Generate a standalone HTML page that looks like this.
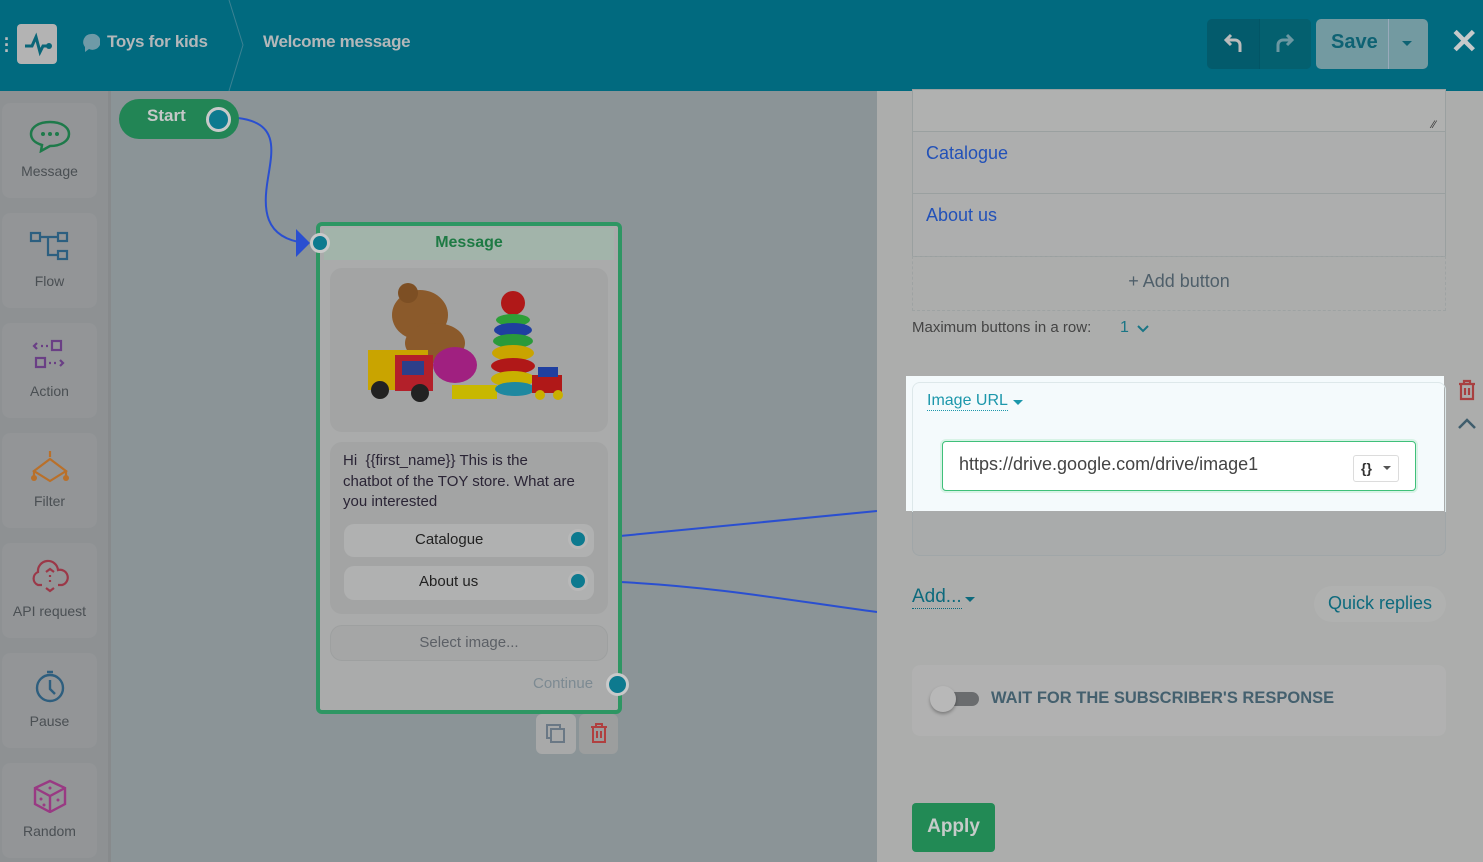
<!DOCTYPE html>
<html><head><meta charset="utf-8"><style>
*{box-sizing:border-box;margin:0;padding:0}
body{width:1483px;height:862px;overflow:hidden;font-family:"Liberation Sans",sans-serif;background:#8b9497;position:relative}
.abs{position:absolute}
.hdr{left:0;top:0;width:1483px;height:91px;background:#016a7f}
.side{left:0;top:91px;width:111px;height:771px;background:#8e9193;border-right:3px solid #878a8c}
.item{position:absolute;left:2px;width:95px;height:95px;background:#939597;border-radius:8px;text-align:center;font-size:14px;color:#4a4f53}
.item svg{display:block;margin:16px auto 10px}
.panel{left:877px;top:91px;width:606px;height:771px;background:#acadac}
.box{border:1px solid #9aa0a0}
.dot{position:absolute;width:20px;height:20px;border-radius:50%;background:#0d7a8f;border:3px solid #c9c9c9}
</style></head><body>
<div class="abs hdr">
 <div class="abs" style="left:4px;top:36px;color:#b9bcbe;font-size:18px;line-height:6px;font-weight:bold">·<br>·<br>·</div>
 <div class="abs" style="left:17px;top:24px;width:40px;height:40px;background:#b3b3b3;border-radius:4px">
  <svg width="40" height="40"><path d="M8 22h7l4-9 4 15 3-6h6" stroke="#0a6678" stroke-width="3" fill="none"/><circle cx="32" cy="22" r="3" fill="#0a6678"/></svg></div>
 <svg class="abs" style="left:82px;top:33px" width="18" height="20"><path d="M9 1a8 8 0 0 0-6 13v5l4-3a8 8 0 1 0 2-15z" fill="#6f9aa7"/></svg>
 <div class="abs" style="left:107px;top:32px;color:#b3b7b9;font-size:17px;font-weight:bold;letter-spacing:-0.3px">Toys for kids</div>
 <svg class="abs" style="left:226px;top:0" width="20" height="91"><path d="M3 0l14 45L3 91" stroke="#3b8293" fill="none"/></svg>
 <div class="abs" style="left:263px;top:32px;color:#b3b7b9;font-size:17px;font-weight:bold;letter-spacing:-0.3px">Welcome message</div>
 <div class="abs" style="left:1207px;top:19px;width:104px;height:50px;background:#035b6c;border-radius:5px"></div>
 <div class="abs" style="left:1259px;top:19px;width:52px;height:50px;background:#04606f;border-radius:0 5px 5px 0;border-left:1px solid #025566"></div>
 <svg class="abs" style="left:1222px;top:31px" width="22" height="24"><path d="M5 9h8a5 5 0 0 1 5 5v7M9 4L4 9l5 5" fill="none" stroke="#bbb" stroke-width="3"/></svg>
 <svg class="abs" style="left:1274px;top:31px" width="22" height="24"><path d="M17 9H9a5 5 0 0 0-5 5v7M13 4l5 5-5 5" fill="none" stroke="#6c98a2" stroke-width="3"/></svg>
 <div class="abs" style="left:1316px;top:19px;width:112px;height:50px;background:#739aa1;border-radius:5px"></div>
 <div class="abs" style="left:1388px;top:19px;width:1px;height:50px;background:#9ab"></div>
 <div class="abs" style="left:1331px;top:31px;color:#0e6273;font-size:20px;font-weight:bold">Save</div>
 <div class="abs" style="left:1402px;top:41px;border:5px solid transparent;border-top-color:#0e6273"></div>
 <div class="abs" style="left:1450px;top:22px;color:#c6c9ca;font-size:34px;font-weight:bold">✕</div>
</div>
<div class="abs side">
 <div class="item" style="top:12px"><svg width="44" height="34"><path d="M22 3c11 0 19 5 19 12s-8 12-19 12l-9 5 1-6C7 24 3 20 3 15 3 8 11 3 22 3z" fill="none" stroke="#1e7a4a" stroke-width="2.5"/><circle cx="15" cy="15" r="2" fill="#1e7a4a"/><circle cx="22" cy="15" r="2" fill="#1e7a4a"/><circle cx="29" cy="15" r="2" fill="#1e7a4a"/></svg>Message</div>
 <div class="item" style="top:122px"><svg width="44" height="34"><g fill="none" stroke="#2c5f80" stroke-width="2.2"><rect x="3" y="4" width="9" height="8"/><rect x="30" y="4" width="9" height="8"/><rect x="30" y="22" width="9" height="8"/><path d="M12 8h18M20 8v18h10"/></g></svg>Flow</div>
 <div class="item" style="top:232px"><svg width="44" height="34"><g fill="none" stroke="#6a3f85" stroke-width="2.2"><path d="M9 4l-3 3 3 3M13 7h2M18 7h2"/><rect x="24" y="2" width="9" height="9"/><rect x="8" y="19" width="9" height="9"/><path d="M21 24h2M26 24h2M32 21l3 3-3 3"/></g></svg>Action</div>
 <div class="item" style="top:342px"><svg width="44" height="34"><g fill="none" stroke="#b9702a" stroke-width="2.2"><path d="M22 2v6M6 22l16-12 16 12-16 10zM6 22v6M38 22v6"/></g><circle cx="6" cy="29" r="3" fill="#b9702a"/><circle cx="38" cy="29" r="3" fill="#b9702a"/></svg>Filter</div>
 <div class="item" style="top:452px"><svg width="44" height="34"><g fill="none" stroke="#9b3848" stroke-width="2.2"><path d="M14 26H10a7 7 0 0 1 0-13 10 10 0 0 1 20-2 7 7 0 0 1 4 15h-4M18 13l4-3 4 3M18 29l4 3 4-3M22 16v2M22 21v2"/></g></svg>API request</div>
 <div class="item" style="top:562px"><svg width="44" height="34"><g fill="none" stroke="#2e5e7e" stroke-width="2.4"><circle cx="22" cy="19" r="13"/><path d="M19 3h6M22 11v9l5 5"/></g></svg>Pause</div>
 <div class="item" style="top:672px"><svg width="44" height="34"><g fill="none" stroke="#993a83" stroke-width="2.4"><path d="M22 2l15 7v16l-15 8-15-8V9zM7 9l15 8 15-8M22 17v16"/></g><circle cx="13" cy="20" r="1.5" fill="#993a83"/><circle cx="16" cy="26" r="1.5" fill="#993a83"/><circle cx="30" cy="21" r="1.5" fill="#993a83"/><circle cx="22" cy="9" r="1.5" fill="#993a83"/></svg>Random</div>
</div>
<svg class="abs" style="left:0;top:0" width="1483" height="862">
 <path d="M238 118c40 5 35 30 30 60s-5 60 37 65" stroke="#2a4fd0" stroke-width="2" fill="none"/>
 <path d="M296 229l14 14-14 14z" fill="#2a4fd0"/>
 <path d="M620 536L877 511M620 582c100 5 180 20 257 30" stroke="#2a4fd0" stroke-width="2" fill="none"/>
</svg>
<div class="abs" style="left:119px;top:99px;width:120px;height:40px;border-radius:20px;background:#228555"></div>
<div class="abs" style="left:147px;top:106px;color:#c5c8c8;font-size:17px;font-weight:bold">Start</div>
<div class="dot" style="left:206px;top:107px;width:25px;height:25px"></div>
<div class="abs" style="left:316px;top:222px;width:306px;height:492px;border:4px solid #2e9663;border-radius:6px;background:#aaabab"></div>
<div class="abs" style="left:324px;top:228px;width:290px;height:32px;background:#a2b4aa;text-align:center;color:#1e7a44;font-size:16px;font-weight:bold;line-height:30px">Message</div>
<div class="dot" style="left:310px;top:233px"></div>
<div class="abs" style="left:330px;top:268px;width:278px;height:164px;background:#a3a4a4;border-radius:12px"></div>
<svg class="abs" style="left:360px;top:275px" width="210" height="135">
 <ellipse cx="60" cy="40" rx="28" ry="25" fill="#8b5a2b"/><circle cx="48" cy="18" r="10" fill="#7d4f24"/><ellipse cx="75" cy="68" rx="30" ry="20" fill="#8b5a2b"/>
 <rect x="8" y="75" width="60" height="40" fill="#c9a400"/><rect x="35" y="80" width="38" height="36" fill="#b3202a"/><rect x="42" y="86" width="22" height="14" fill="#2d3f8a"/>
 <circle cx="20" cy="115" r="9" fill="#222"/><circle cx="60" cy="118" r="9" fill="#222"/>
 <ellipse cx="95" cy="90" rx="22" ry="18" fill="#a02080"/><rect x="92" y="110" width="45" height="14" fill="#c8b800"/>
 <circle cx="153" cy="28" r="12" fill="#b01818"/><ellipse cx="153" cy="45" rx="17" ry="6" fill="#2e9f37"/><ellipse cx="153" cy="55" rx="19" ry="7" fill="#1f3fa0"/><ellipse cx="153" cy="66" rx="20" ry="7" fill="#2a9a3a"/><ellipse cx="153" cy="78" rx="21" ry="8" fill="#c9a400"/><ellipse cx="153" cy="91" rx="22" ry="8" fill="#b01818"/><ellipse cx="153" cy="104" rx="22" ry="8" fill="#c9b000"/><ellipse cx="155" cy="114" rx="20" ry="7" fill="#1e88a0"/>
 <rect x="172" y="100" width="30" height="18" fill="#b01818"/><rect x="178" y="92" width="20" height="10" fill="#1f3fa0"/><circle cx="180" cy="120" r="5" fill="#c9b000"/><circle cx="198" cy="120" r="5" fill="#c9b000"/>
</svg>
<div class="abs" style="left:330px;top:442px;width:278px;height:172px;background:#a3a4a4;border-radius:12px"></div>
<div class="abs" style="left:343px;top:451px;width:265px;font-size:15px;line-height:20.5px;color:#2a2435;white-space:nowrap">Hi &nbsp;{{first_name}} This is the<br>chatbot of the TOY store. What are<br>you interested</div>
<div class="abs" style="left:344px;top:524px;width:250px;height:33px;background:#b0b1b1;border-radius:10px;line-height:31px;font-size:15px;color:#222;padding-left:71px">Catalogue</div>
<div class="abs" style="left:344px;top:566px;width:250px;height:34px;background:#b0b1b1;border-radius:10px;line-height:32px;font-size:15px;color:#222;padding-left:75px">About us</div>
<div class="dot" style="left:568px;top:529px;border-color:#b8b8b8"></div>
<div class="dot" style="left:568px;top:571px;border-color:#b8b8b8"></div>
<div class="abs" style="left:330px;top:625px;width:278px;height:36px;border:1px solid #9ea0a0;border-radius:12px;background:#a5a6a6;text-align:center;line-height:33px;font-size:15px;color:#5c6066">Select image...</div>
<div class="abs" style="left:533px;top:675px;font-size:15px;color:#7d8a92">Continue</div>
<div class="dot" style="left:606px;top:673px;width:23px;height:23px"></div>
<div class="abs" style="left:536px;top:714px;width:40px;height:40px;background:#a8a9a9;border-radius:6px"></div>
<div class="abs" style="left:579px;top:714px;width:39px;height:40px;background:#9c9e9e;border-radius:6px"></div>
<svg class="abs" style="left:546px;top:724px" width="20" height="20"><rect x="1" y="1" width="13" height="13" fill="none" stroke="#6a7885" stroke-width="2"/><rect x="5" y="5" width="13" height="13" fill="#a8a9a9" stroke="#6a7885" stroke-width="2"/></svg>
<svg class="abs" style="left:589px;top:723px" width="20" height="20"><path d="M2 4h16M7 4V1h6v3M4 4v15h12V4M8 8v7M12 8v7" fill="none" stroke="#b04040" stroke-width="2"/></svg>

<div class="abs panel">
 <div class="abs box" style="left:35px;top:-2px;width:534px;height:43px;background:#b0b1b0"></div>
 <div class="abs" style="left:555px;top:28px;color:#333;font-size:11px">⁄⁄</div>
 <div class="abs box" style="left:35px;top:40px;width:534px;height:63px;background:#adaeae"></div>
 <div class="abs" style="left:49px;top:52px;color:#2251b8;font-size:18px">Catalogue</div>
 <div class="abs box" style="left:35px;top:102px;width:534px;height:64px;background:#adaeae"></div>
 <div class="abs" style="left:49px;top:114px;color:#2251b8;font-size:18px">About us</div>
 <div class="abs" style="left:35px;top:165px;width:534px;height:55px;border:1px dashed #9ea3a3;text-align:center;line-height:48px;font-size:18px;color:#4f5f6a">+ Add button</div>
 <div class="abs" style="left:35px;top:228px;font-size:15px;color:#444">Maximum buttons in a row:</div>
 <div class="abs" style="left:243px;top:228px;color:#1a7585;font-size:16px">1</div>
 <svg class="abs" style="left:260px;top:234px" width="12" height="8"><path d="M1 1l5 5 5-5" fill="none" stroke="#1a7585" stroke-width="2"/></svg>
 <div class="abs" style="left:35px;top:292px;width:534px;height:173px;border:1px solid #a0a6a8;border-radius:8px;background:#a9abab"></div>
 <svg class="abs" style="left:580px;top:288px" width="20" height="22"><path d="M2 5h16M7 5V2h6v3M4 5v15h12V5M8 9v7M12 9v7" fill="none" stroke="#a84040" stroke-width="2.2"/></svg>
 <svg class="abs" style="left:580px;top:327px" width="20" height="12"><path d="M2 10l8-8 8 8" fill="none" stroke="#3f5d6c" stroke-width="2.5"/></svg>
 <div class="abs" style="left:35px;top:495px;font-size:19px;color:#0d6a7d;border-bottom:1px dotted #0d6a7d">Add...</div>
 <div class="abs" style="left:88px;top:506px;border:5px solid transparent;border-top-color:#0d6a7d"></div>
 <div class="abs" style="left:437px;top:495px;width:132px;height:36px;border-radius:18px;background:#b0b1b0;text-align:center;line-height:35px;font-size:18px;color:#0d6a7d">Quick replies</div>
 <div class="abs" style="left:35px;top:574px;width:534px;height:71px;border-radius:8px;background:#b1b1b1"></div>
 <div class="abs" style="left:58px;top:601px;width:44px;height:14px;border-radius:7px;background:#6a6c6e"></div>
 <div class="abs" style="left:53px;top:595px;width:26px;height:26px;border-radius:50%;background:#b8b8b8;box-shadow:0 2px 3px rgba(0,0,0,.3)"></div>
 <div class="abs" style="left:114px;top:598px;font-size:16.5px;font-weight:bold;color:#44606e">WAIT FOR THE SUBSCRIBER'S RESPONSE</div>
 <div class="abs" style="left:35px;top:712px;width:83px;height:49px;border-radius:4px;background:#228a55;color:#c6cbc9;font-size:19px;font-weight:bold;text-align:center;line-height:47px">Apply</div>
</div>
<div class="abs" style="left:906px;top:376px;width:538px;height:135px;background:#f4fafc"></div>
<div class="abs" style="left:912px;top:382px;width:534px;height:130px;border:1px solid #dde8ea;border-bottom:0;border-radius:8px 8px 0 0"></div>
<div class="abs" style="left:927px;top:392px;font-size:16px;color:#1c97ab;border-bottom:1px dotted #1c97ab">Image URL</div>
<div class="abs" style="left:1013px;top:400px;border:5px solid transparent;border-top-color:#1c97ab"></div>
<div class="abs" style="left:942px;top:441px;width:474px;height:50px;border:1.5px solid #3fc07a;border-radius:4px;background:#fff;box-shadow:0 0 0 2px #d8f3e6"></div>
<div class="abs" style="left:959px;top:454px;font-size:18px;color:#444">https://drive.google.com/drive/image1</div>
<div class="abs" style="left:1353px;top:455px;width:46px;height:27px;border:1px solid #dcdcdc;border-radius:3px;font-size:14px;font-weight:bold;color:#333;line-height:24px;padding-left:7px">{}</div>
<div class="abs" style="left:1383px;top:466px;border:4.5px solid transparent;border-top-color:#555"></div>
</body></html>
